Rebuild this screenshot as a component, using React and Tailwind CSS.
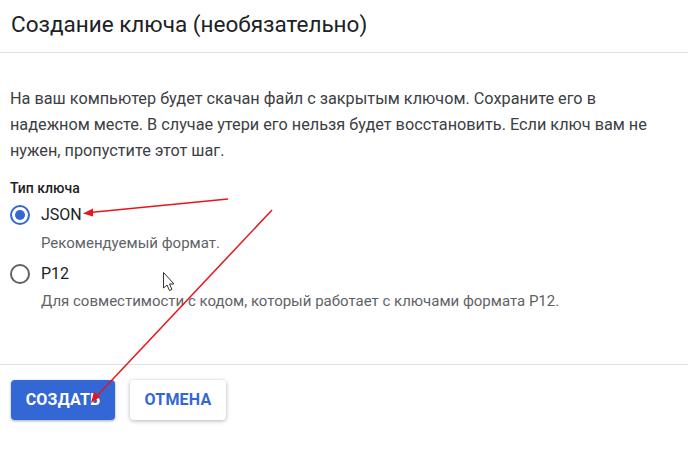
export default function App() {
  return (
    <main className="relative w-[688px] h-[459px] bg-white text-[#202124] font-['Roboto',sans-serif] overflow-hidden">
      {/* Header */}
      <header className="h-[53px] border-b border-[#e0e0e0] flex items-center pl-[11px] pb-[4px]">
        <h1 className="text-[22.5px] leading-none text-[#202124]">Создание ключа (необязательно)</h1>
      </header>

      {/* Body */}
      <div className="px-[10px] pt-[33px]">
        <p className="text-[16.25px] leading-[26px] text-[#3c4043] w-[680px]">
          На ваш компьютер будет скачан файл с закрытым ключом. Сохраните его в<br />
          надежном месте. В случае утери его нельзя будет восстановить. Если ключ вам не<br />
          нужен, пропустите этот шаг.
        </p>

        <section className="mt-[14px]">
          <h2 className="text-[14px] font-medium leading-[20px] text-[#202124]">Тип ключа</h2>

          <label className="flex items-center gap-[11px] mt-[5px] h-[24px]">
            <span className="w-[20px] h-[20px] rounded-full border-[2.5px] border-[#3367d6] flex items-center justify-center">
              <span className="w-[10px] h-[10px] rounded-full bg-[#3367d6]" />
            </span>
            <span className="text-[16px] text-[#202124]">JSON</span>
          </label>
          <div className="pl-[31px] text-[15px] leading-[20px] text-[#5f6368] mt-[6px]">Рекомендуемый формат.</div>

          <label className="flex items-center gap-[11px] mt-[9px] h-[24px]">
            <span className="w-[20px] h-[20px] rounded-full border-[2.5px] border-[#5f6368]" />
            <span className="text-[16px] text-[#202124]">P12</span>
          </label>
          <div className="pl-[31px] text-[15px] leading-[20px] text-[#5f6368] mt-[5px]">
            Для совместимости с кодом, который работает с ключами формата P12.
          </div>
        </section>
      </div>

      {/* Footer */}
      <footer className="absolute left-0 right-0 top-[364px] border-t border-[#e0e0e0] flex gap-[15px] px-[11px] pt-[15px]">
        <button className="h-[40px] w-[104px] rounded-[4px] bg-[#3367d6] text-white text-[16px] font-bold tracking-[0.2px] shadow-[0_1px_3px_rgba(0,0,0,0.35)]">
          СОЗДАТЬ
        </button>
        <button className="h-[40px] w-[96px] rounded-[4px] bg-white text-[#3367d6] text-[16px] font-bold tracking-[0.2px] shadow-[0_1px_4px_rgba(0,0,0,0.3)]">
          ОТМЕНА
        </button>
      </footer>

      {/* Annotations */}
      <svg className="absolute inset-0 pointer-events-none" width="688" height="459">
        <line x1="228" y1="199" x2="90" y2="212.5" stroke="#e8141b" strokeWidth="1.5" />
        <polygon points="83,213.5 93,208.5 93,216.5" fill="#e8141b" />
        <line x1="272" y1="210" x2="96" y2="397" stroke="#e8141b" strokeWidth="1.5" />
        <polygon points="91,403 94,392 100,397" fill="#e8141b" />
        {/* cursor */}
        <path d="M163.5 272.5 L163.5 288 L167 285 L169.5 290.5 L172 289.5 L169.5 284 L174 284 Z" fill="#fff" stroke="#333" strokeWidth="1" />
      </svg>
    </main>
  );
}
